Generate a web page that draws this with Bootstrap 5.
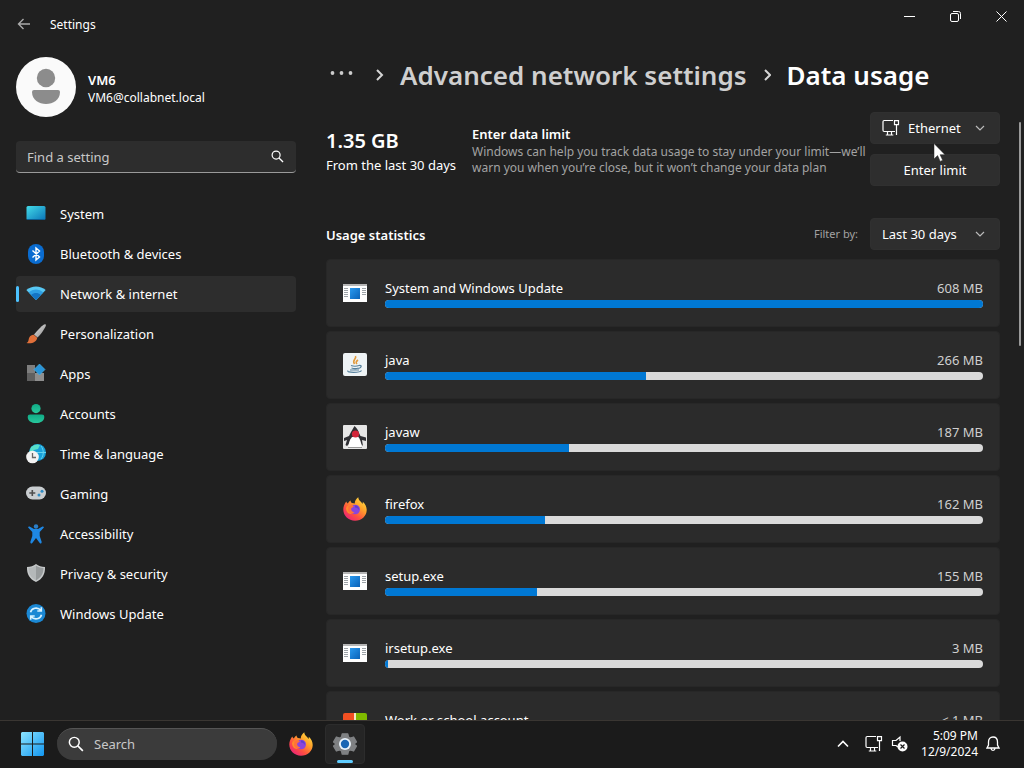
<!DOCTYPE html>
<html lang="en" data-bs-theme="dark">
<head>
<meta charset="utf-8">
<meta name="viewport" content="width=device-width, initial-scale=1">
<title>Settings - Data usage</title>
<link href="https://cdn.jsdelivr.net/npm/bootstrap@5.3.0/dist/css/bootstrap.min.css" rel="stylesheet">
<style>
  :root { --win: #202020; --panel: #2b2b2b; --control: #2e2e2e; --bar: #1b1b1b; --blue: #0078d4; --accent: #60cdff; }
  body { font-family: "Noto Sans", "Open Sans", sans-serif; font-size: 13px; line-height: 20px; color: #fff; background: var(--win); }
  svg { display: block; flex: none; }
  .line-ico { fill: none; stroke: currentColor; }
  .plain-btn { background: none; border: 0; padding: 0; color: inherit; }
  .fill-rest { min-height: 0; min-width: 0; }
  .title-bar { height: 48px; padding-left: 16px; }
  .title-text { font-size: 12px; padding: 2px 0 0 18px; }
  .back-btn { color: #aaa; }
  .win-btn { width: 46px; height: 32px; display: flex; align-items: center; justify-content: center; }
  .side-col { width: 312px; padding: 9px 16px 0; flex: none; }
  .avatar { width: 60px; height: 60px; }
  .user-name { font-weight: 600; line-height: 18px; }
  .user-mail { font-size: 12px; line-height: 18px; }
  .find-box { margin-top: 24px; height: 32px; background: #2d2d2d; border-radius: 4px; border-bottom: 1px solid #9a9a9a; padding: 0 12px 0 11px; }
  .find-box input, .task-search input { background: none; border: 0; outline: 0; color: inherit; min-width: 0; padding: 0; }
  .find-box input::placeholder, .task-search input::placeholder { color: #c8c8c8; opacity: 1; }
  .side-nav { margin-top: 23px; gap: 4px; }
  .side-nav .nav-link { height: 36px; display: flex; align-items: center; gap: 14px; padding: 0 10px; color: #fff; border-radius: 4px; position: relative; }
  .side-nav .nav-link.active { background: #2d2d2d; }
  .side-nav .nav-link.active::before { content: ""; position: absolute; left: 0; top: 10px; width: 3px; height: 16px; border-radius: 2px; background: #4cc2ff; }
  .main-col { padding-left: 14px; }
  .crumbs { height: 56px; padding: 0 0 2px 4px; font-size: 26px; line-height: 36px; font-weight: 600; white-space: nowrap; }
  .crumbs a { color: #cfcfcf; text-decoration: none; }
  .scroll-area { padding: 8px 0 0; }
  .total { font-size: 20px; font-weight: 600; line-height: 28px; }
  .sum-total { padding: 15px 16px 0 0; white-space: nowrap; }
  .sum-limit { padding-top: 12px; }
  .hint { font-size: 12px; line-height: 16px; color: #a3a3a3; }
  .side-controls { width: 130px; flex: none; gap: 10px; }
  .ctl { height: 32px; width: 130px; background: var(--control); border: 1px solid #303030; border-radius: 4px; color: #fff; font-size: 13px; line-height: 20px; padding: 0; }
  select.ctl { appearance: none; padding-left: 11px; }
  select.with-ico { padding-left: 37px; }
  .ctl-ico, .ctl-chev, .pointer { position: absolute; pointer-events: none; }
  .ctl-ico { left: 12px; top: 7px; }
  .ctl-chev { right: 15px; top: 11px; color: #bbb; }
  .pointer { left: 63px; top: 31px; z-index: 2; }
  .usage-head { margin-top: 32px; height: 32px; }
  .usage-title { font-size: 13px; line-height: 20px; padding-top: 2px; }
  .filter-label { font-size: 11px; line-height: 16px; color: #a3a3a3; }
  .usage-list { margin-top: 9px; gap: 4px; }
  .usage-card { background: var(--panel); border: 1px solid #272727; border-radius: 4px; height: 68px; padding: 0 16px; display: flex; align-items: center; gap: 18px; flex: none; }
  .usage-card .progress { --bs-progress-height: 8px; --bs-progress-bg: #dadada; --bs-progress-bar-bg: var(--blue); --bs-progress-border-radius: 4px; margin-top: 2px; }
  .size-text { color: #cfcfcf; }
  .rail { width: 24px; flex: none; padding-top: 18px; }
  .rail-thumb { width: 2px; height: 224px; margin-left: 19px; border-radius: 1px; background: #9a9a9a; }
  .task-bar { height: 48px; background: var(--bar); border-top: 1px solid #3a3632; padding: 0 20px 2px; flex: none; }
  .task-search { width: 220px; height: 32px; margin: 0 12px; background: #3b3b3b; border-top: 1px solid #555; border-radius: 16px; padding: 0 11px; gap: 10px; }
  .task-cell { width: 40px; height: 40px; margin-left: 12px; border-radius: 4px; background: #252525; border: 1px solid #2c2c2c; position: relative; display: flex; align-items: center; justify-content: center; }
  .task-cell::after { content: ""; position: absolute; left: 11px; bottom: 0; width: 16px; height: 3px; border-radius: 2px; background: var(--accent); }
  .clock { font-size: 12px; line-height: 16px; text-align: right; }
</style>
</head>
<body class="vh-100 d-flex flex-column overflow-hidden">

<svg width="0" height="0" class="position-absolute" aria-hidden="true">
  <defs>
    <linearGradient id="gBlue" x1="0" y1="0" x2="1" y2="1"><stop offset="0" stop-color="#2a9af0"/><stop offset="1" stop-color="#0a62b8"/></linearGradient>
    <linearGradient id="gSys" x1="0" y1="0" x2="1" y2="1"><stop offset="0" stop-color="#43dbe8"/><stop offset="1" stop-color="#0a74b8"/></linearGradient>
    <linearGradient id="gWin" x1="0" y1="0" x2="1" y2="1"><stop offset="0" stop-color="#8be4ff"/><stop offset="1" stop-color="#1296f0"/></linearGradient>
    <linearGradient id="gFox" x1="1" y1="0" x2="0.2" y2="1"><stop offset="0" stop-color="#fff04a"/><stop offset=".4" stop-color="#ffa22a"/><stop offset=".7" stop-color="#ff5040"/><stop offset="1" stop-color="#e8207c"/></linearGradient>
    <linearGradient id="gTeal" x1="0" y1="0" x2="0" y2="1"><stop offset="0" stop-color="#10ab86"/><stop offset="1" stop-color="#28c79c"/></linearGradient>
    <linearGradient id="gGray" x1="0" y1="0" x2="1" y2="1"><stop offset="0" stop-color="#e2e2e2"/><stop offset="1" stop-color="#8d8d8d"/></linearGradient>
    <symbol id="exe" viewBox="0 0 24 24">
      <path fill="#fff" d="M0 3h24v18H0z"/><path fill="#b5b5b5" d="M0 3h24v2H0z"/>
      <path fill="url(#gBlue)" d="M7 7h10v11H7z"/>
      <path stroke="#9da3a8" d="M1 7.500h4M1 9.500h4M1 11.500h4M1 13.500h4M1 15.500h4M19 7.500h4M19 9.500h4M19 11.500h4M19 13.500h4"/>
    </symbol>
    <symbol id="fox" viewBox="0 0 24 24">
      <path fill="url(#gFox)" d="M3.200 4.500c.4 1 1 1.500 1.700 2 .6-1.300 1.500-2.400 2.700-3 0 1 .5 1.900 1.300 2.500 1 .2 2 .6 2.900.6C11.500 4 13.500 1.500 15.300.3c0 2.300 1.300 3.300 2.800 4.700.6.6 1 1.300 1.200 2 .5-.8.600-1.400.500-2.300 2.500 2 3.900 5 3.900 8.300C23.700 19 18.500 23.800 12 23.800S.3 18.900.3 12.600c0-3 1-5.500 2.900-8.100z"/>
      <path fill="#ff8a2c" d="M3 11c2-3.500 5-4 8-3l2 3-5 6c-3 0-5-3-5-6z"/>
      <circle cx="12.200" cy="12.500" r="4.800" fill="#8a45dc"/>
      <path fill="#5d3fd0" d="M12 8.500c2.500 0 4.300 2 4 4.500-.8-1.500-2-2.500-4-2.500z"/>
      <path fill="#ff7139" d="M5.500 9c2-1.200 4.200-.7 5.300.2-.6 1.300-2.300 1.200-2.700 2.600-.2 2 1.500 3.500 3.400 3.800-2 1.800-5.300 1-6.500-2z"/>
    </symbol>
    <symbol id="net" viewBox="0 0 18 18">
      <path fill="none" stroke="currentColor" stroke-width="1.200" d="M11 1.500H2.200Q1 1.500 1 2.700v8.600q0 1.200 1.200 1.200H13M5.500 12.500v3M9.500 12.500v3M3.800 16h7.500M12.500 1.600h4v4h-4zM14.500 5.600V16"/>
    </symbol>
    <symbol id="chev" viewBox="0 0 10 10"><path fill="none" stroke="currentColor" stroke-width="1.200" d="M1 3l4 4 4-4"/></symbol>
    <symbol id="crumb" viewBox="0 0 10 14"><path fill="none" stroke="#d5d5d5" stroke-width="2" d="M2 2l5 5-5 5"/></symbol>
    <symbol id="lens" viewBox="0 0 14 14"><circle cx="5.500" cy="5.500" r="4.300" fill="none" stroke="currentColor" stroke-width="1.300"/><path stroke="currentColor" stroke-width="1.400" d="M8.600 8.600l4.400 4.400"/></symbol>
  </defs>
</svg>

<div class="fill-rest flex-grow-1 d-flex flex-column overflow-hidden">
  <header class="title-bar d-flex align-items-start justify-content-between flex-shrink-0">
    <div class="d-flex align-items-center h-100">
      <button class="plain-btn back-btn" aria-label="Back"><svg class="line-ico" width="16" height="16" stroke-width="1.400"><path d="M14 8H2.500M7.500 3l-5 5 5 5"/></svg></button>
      <span class="title-text">Settings</span>
    </div>
    <div class="d-flex">
      <button class="plain-btn win-btn" aria-label="Minimize"><svg class="line-ico" width="11" height="11"><path d="M0 5.500h11"/></svg></button>
      <button class="plain-btn win-btn" aria-label="Restore"><svg class="line-ico" width="11" height="11"><rect x=".5" y="2.500" width="8" height="8" rx="1.500"/><path d="M3 .5h5.500q2 0 2 2V8"/></svg></button>
      <button class="plain-btn win-btn" aria-label="Close"><svg class="line-ico" width="11" height="11"><path d="M.5.5l10 10M10.500.5l-10 10"/></svg></button>
    </div>
  </header>

  <div class="fill-rest d-flex flex-grow-1">
    <aside class="side-col">
      <div class="d-flex align-items-center">
        <svg class="avatar" viewBox="0 0 60 60"><circle cx="30" cy="30" r="30" fill="#fafafa"/><circle cx="30" cy="21" r="9.200" fill="#8c8c8c"/><path fill="#8c8c8c" d="M18 33h24q2 0 2 2c0 8-7 12-14 12s-14-4-14-12q0-2 2-2z"/></svg>
        <div class="ms-2 ps-1 pt-1">
          <div class="user-name">VM6</div>
          <div class="user-mail">VM6@collabnet.local</div>
        </div>
      </div>
      <div class="find-box d-flex align-items-center">
        <input class="flex-grow-1" type="text" placeholder="Find a setting" aria-label="Find a setting">
        <svg width="13" height="13"><use href="#lens"/></svg>
      </div>
      <nav class="side-nav nav flex-column">
        <a class="nav-link" href="#"><svg width="20" height="20"><rect x=".5" y="2" width="19" height="14" rx="1.500" fill="url(#gSys)"/><path stroke="#0b5d92" d="M1 15.500h18"/></svg>System</a>
        <a class="nav-link" href="#"><svg width="20" height="20"><rect x="2" y="0" width="16" height="20" rx="8" fill="#0a6cd0"/><path class="line-ico" stroke-width="1.400" d="M6.500 6.500l7 6.500-3.500 3V4l3.500 3-7 6.500"/></svg>Bluetooth &amp; devices</a>
        <a class="nav-link active" href="#" aria-current="page"><svg width="20" height="20"><path fill="#58c8f4" d="M.3 6C5.500 1.300 14.500 1.300 19.700 6L10 16z"/><path fill="#2e9fe4" d="M2.700 8.500C7 4.500 13 4.500 17.300 8.500L10 16z"/><path fill="#1474c4" d="M5.200 11c2.800-2.600 6.800-2.600 9.600 0L10 16z"/></svg>Network &amp; internet</a>
        <a class="nav-link" href="#"><svg width="20" height="20"><path fill="url(#gGray)" d="M19.500.3c.7.600.4 1.600-.2 2.700-2.200 4-4.700 7.500-7.800 10.500L8 10.500C11.500 6.500 15 2.500 18 .5q1-.5 1.500-.2z"/><path fill="#e0703a" d="M7.800 10.700l3.400 3c-.4 4-5 6.300-10.700 5.300 2.500-1.300 1.800-3.500 2.800-5.600 1-2 2.700-2.800 4.500-2.700z"/></svg>Personalization</a>
        <a class="nav-link" href="#"><svg width="20" height="20"><path fill="#7e7e7e" d="M1 1h8v8H1z"/><path fill="#606060" d="M1 9h8v8H1z"/><path fill="#8e8e8e" d="M9 9h9v8H9z"/><path fill="#2994d8" stroke="#4cb9ef" stroke-width=".6" d="M13.500 0l5.500 5.500-5.500 5.500L8 5.500z"/></svg>Apps</a>
        <a class="nav-link" href="#"><svg width="20" height="20"><circle cx="10" cy="4.600" r="4.600" fill="url(#gTeal)"/><path fill="url(#gTeal)" d="M4 10.500h12q2.300 0 2.300 2.200c0 4-3.300 6.300-8.300 6.300s-8.300-2.300-8.300-6.300q0-2.200 2.300-2.200z"/></svg>Accounts</a>
        <a class="nav-link" href="#"><svg width="20" height="20"><circle cx="11.500" cy="8.500" r="8.500" fill="#18a0d8"/><path fill="#57dfc9" d="M5 3c4-3 7-3 9-2l-2 4-4 1-3 4-2-1z"/><path fill="none" stroke="#64d3ef" d="M15 2c3 4 3 9 0 13M11 8.500h9"/><circle cx="6.500" cy="13" r="6.300" fill="#f2f2f2"/><path fill="none" stroke="#666" stroke-width="1.300" d="M6.500 9v4.500H10"/></svg>Time &amp; language</a>
        <a class="nav-link" href="#"><svg width="20" height="20"><rect x="0" y="2.500" width="20" height="13" rx="6.500" fill="#c9cdd0"/><path stroke="#4e4e4e" stroke-width="1.600" d="M3.300 9h6M6.300 6v6"/><circle cx="13" cy="11" r="1.500" fill="#2e8cc4"/><circle cx="16" cy="7.200" r="1.500" fill="#2e8cc4"/></svg>Gaming</a>
        <a class="nav-link" href="#"><svg width="20" height="20"><circle cx="10" cy="2.500" r="2.200" fill="#2b7fc8"/><path fill="#1e88e5" d="M3.500 2.500L8 5h4l4.500-2.500q1.300-.3 1.400 1L13.700 8v4l2 6q0 1.700-1.600 1.500L10 14l-4.100 5.500q-1.600.2-1.600-1.500l2-6V8L2.100 3.500q.1-1.300 1.400-1z"/></svg>Accessibility</a>
        <a class="nav-link" href="#"><svg width="20" height="20"><path fill="#c6c9ca" d="M10 0c2.500 2 5.500 3 9 3 .3 7-2.500 12-9 15C3.500 15 .7 10 1 3c3.500 0 6.500-1 9-3z"/><path fill="#989c9d" d="M10 1.500c2 1.500 4.300 2.300 7.500 2.600C17.500 10 15 13.700 10 16.500z"/><path fill="#b4b8b9" d="M10 1.500v15C5 13.700 2.500 10 2.500 4.100 5.700 3.800 8 3 10 1.500z"/></svg>Privacy &amp; security</a>
        <a class="nav-link" href="#"><svg width="20" height="20"><circle cx="10" cy="9.500" r="9.500" fill="#1b88d4"/><path fill="none" stroke="#d8f2ff" stroke-width="1.600" d="M4.500 8.300C5.500 4 11.500 2.500 15 6.500M15.300 3.200V7h-4M15.500 10.700c-1 4.300-7 5.800-10.500 1.800M4.700 15.800V12h4"/></svg>Windows Update</a>
      </nav>
    </aside>

    <div class="main-col fill-rest flex-grow-1 d-flex flex-column">
      <nav class="crumbs d-flex align-items-center flex-shrink-0" aria-label="Breadcrumb">
        <a href="#" aria-label="More"><svg width="24" height="8"><circle cx="2.500" cy="2" r="1.900" fill="#ccc"/><circle cx="11.500" cy="2" r="1.900" fill="#ccc"/><circle cx="20.500" cy="2" r="1.900" fill="#ccc"/></svg></a>
        <svg class="ms-3 me-2" width="22" height="14"><use href="#crumb" x="5" width="10" height="14"/></svg>
        <a href="#">Advanced network settings</a>
        <svg class="mx-3" width="8" height="14"><use href="#crumb" width="10" height="14"/></svg>
        <span aria-current="page">Data usage</span>
      </nav>
      <div class="fill-rest d-flex flex-grow-1">
        <main class="scroll-area flex-grow-1 overflow-hidden">
          <section class="d-flex">
            <div class="sum-total">
              <div class="total">1.35 GB</div>
              <div>From the last 30 days</div>
            </div>
            <div class="sum-limit flex-grow-1">
              <div class="fw-semibold">Enter data limit</div>
              <div class="hint">Windows can help you track data usage to stay under your limit—we’ll warn you when you’re close, but it won’t change your data plan</div>
            </div>
            <div class="side-controls d-flex flex-column">
              <div class="position-relative">
                <select class="ctl with-ico d-block" aria-label="Network"><option>Ethernet</option></select>
                <svg class="ctl-ico" width="18" height="18"><use href="#net"/></svg>
                <svg class="ctl-chev" width="10" height="10"><use href="#chev"/></svg>
                <svg class="pointer" width="13" height="20"><path fill="#fff" stroke="#222" stroke-width=".5" d="M1 .5v15.500l3.600-3.400 2.600 5.800 2.500-1.100-2.600-5.600H12z"/></svg>
              </div>
              <button class="ctl">Enter limit</button>
            </div>
          </section>

          <section>
            <div class="usage-head d-flex align-items-center">
              <h2 class="usage-title m-0 fw-semibold flex-grow-1">Usage statistics</h2>
              <label class="filter-label me-2 pe-1" for="range">Filter by:</label>
              <div class="position-relative">
                <select id="range" class="ctl d-block"><option>Last 30 days</option></select>
                <svg class="ctl-chev" width="10" height="10"><use href="#chev"/></svg>
              </div>
            </div>
            <div class="usage-list d-flex flex-column">
              <div class="usage-card">
                <svg width="24" height="24"><use href="#exe"/></svg>
                <div class="flex-grow-1"><div class="d-flex justify-content-between"><span>System and Windows Update</span><span class="size-text">608 MB</span></div>
                <div class="progress"><div class="progress-bar" style="width:100%"></div></div></div>
              </div>
              <div class="usage-card">
                <svg width="24" height="24"><rect width="24" height="23" rx="2" fill="#eef3f5"/><path fill="none" stroke="#e29a3c" stroke-width="1.600" d="M12.500 3c1.500 3-4 4-1 8M15 7c-2 1.500-2.500 2.500-1 4"/><path fill="none" stroke="#56809c" stroke-width="1.200" d="M8 12.500q4 1.500 8 0M8.500 15q4 1.300 7 0M16 12.500c3-.5 3 2-.5 3M5 17.500c-2 2.500 12 2.500 13.500 0M7 17h9"/></svg>
                <div class="flex-grow-1"><div class="d-flex justify-content-between"><span>java</span><span class="size-text">266 MB</span></div>
                <div class="progress"><div class="progress-bar" style="width:43.700%"></div></div></div>
              </div>
              <div class="usage-card">
                <svg width="24" height="24"><rect width="24" height="24" rx="1" fill="#e6e6e6"/><path fill="#2f2f33" d="M11.500 1c2 2 4 4 4.500 7l1.500 3 5.500 1.500V16l-4-1 1 6-4-4-8 0-4 4-1.500-1L4 15l-3 1v-3l5-2 2-4z"/><path fill="#fff" d="M9 12l6-.5c2 2.500 3.500 6 3.500 10.500q-6 1.500-13 0C5.500 18 6.500 15 9 12z"/><circle cx="12.500" cy="9" r="3.600" fill="#d3263a"/><path stroke="#999" d="M5 22.500h14"/></svg>
                <div class="flex-grow-1"><div class="d-flex justify-content-between"><span>javaw</span><span class="size-text">187 MB</span></div>
                <div class="progress"><div class="progress-bar" style="width:30.800%"></div></div></div>
              </div>
              <div class="usage-card">
                <svg width="24" height="24"><use href="#fox"/></svg>
                <div class="flex-grow-1"><div class="d-flex justify-content-between"><span>firefox</span><span class="size-text">162 MB</span></div>
                <div class="progress"><div class="progress-bar" style="width:26.800%"></div></div></div>
              </div>
              <div class="usage-card">
                <svg width="24" height="24"><use href="#exe"/></svg>
                <div class="flex-grow-1"><div class="d-flex justify-content-between"><span>setup.exe</span><span class="size-text">155 MB</span></div>
                <div class="progress"><div class="progress-bar" style="width:25.400%"></div></div></div>
              </div>
              <div class="usage-card">
                <svg width="24" height="24"><use href="#exe"/></svg>
                <div class="flex-grow-1"><div class="d-flex justify-content-between"><span>irsetup.exe</span><span class="size-text">3 MB</span></div>
                <div class="progress"><div class="progress-bar" style="width:0.500%"></div></div></div>
              </div>
              <div class="usage-card">
                <svg width="24" height="24"><path fill="#f25022" d="M2 0h9v11H0V2q0-2 2-2z"/><path fill="#7fba00" d="M13 0h9q2 0 2 2v9H13z"/><path fill="#00a4ef" d="M0 13h11v11H0z"/><path fill="#ffb900" d="M13 13h11v11H13z"/><path stroke="#f3e9c0" stroke-width="2" d="M12 0v24"/></svg>
                <div class="flex-grow-1"><div class="d-flex justify-content-between"><span>Work or school account</span><span class="size-text">&lt; 1 MB</span></div>
                <div class="progress"><div class="progress-bar" style="width:0%"></div></div></div>
              </div>
            </div>
          </section>
        </main>
        <div class="rail"><div class="rail-thumb"></div></div>
      </div>
    </div>
  </div>
</div>

<footer class="task-bar d-flex align-items-center">
  <button class="plain-btn" aria-label="Start"><svg width="25" height="24"><path fill="url(#gWin)" d="M2 0h10v11.500H1V1zM13 0h10l1 1v10.500H13zM1 12.500h11V24H2l-1-1zM13 12.500h11V23l-1 1H13z"/></svg></button>
  <div class="task-search d-flex align-items-center">
    <svg width="16" height="16"><use href="#lens"/></svg>
    <input type="text" placeholder="Search" aria-label="Search">
  </div>
  <button class="plain-btn" aria-label="Firefox"><svg width="24" height="24"><use href="#fox"/></svg></button>
  <button class="plain-btn task-cell" aria-label="Settings"><svg width="24" height="24" viewBox="0 0 26 26"><path fill="#7f8183" stroke="#7f8183" stroke-width="1.500" stroke-linejoin="round" d="M10 2h6l.8 3.500 2 1.100L22.300 5.500l3 5.200-2.600 2.300 2.600 2.300-3 5.200-3.500-1.100-2 1.100L16 24h-6l-.8-3.500-2-1.100-3.500 1.100-3-5.200L3.300 13 .7 10.700l3-5.200 3.500 1.100 2-1.100z"/><circle cx="13" cy="13" r="6.500" fill="#e9f2fa"/><circle cx="13" cy="13" r="4.500" fill="#1a66b4"/></svg></button>
  <div class="ms-auto d-flex align-items-center pe-1">
    <button class="plain-btn me-3" aria-label="Show hidden icons"><svg class="line-ico" width="12" height="10" stroke-width="1.600"><path d="M1 7.500l5-5 5 5"/></svg></button>
    <svg class="me-2" width="18" height="18"><use href="#net"/></svg>
    <svg width="18" height="18"><path class="line-ico" stroke-width="1.200" d="M7 12l-2-1.500H1.500v-5H5L9 2v4"/><circle cx="11.500" cy="11.500" r="5" fill="#fff"/><path stroke="#1b1b1b" stroke-width="1.200" d="M9.500 9.500l4 4M13.500 9.500l-4 4"/></svg>
    <div class="clock ms-2 ps-1"><div>5:09 PM</div><div>12/9/2024</div></div>
    <button class="plain-btn ms-2" aria-label="Notifications"><svg class="line-ico" width="14" height="16" stroke-width="1.300"><path d="M7 1C4 1 2.500 3.300 2.500 6v3L1 12h12l-1.500-3V6C11.500 3.300 10 1 7 1zM5 12.500c.3 2.500 3.700 2.500 4 0"/></svg></button>
  </div>
</footer>
<script src="https://cdn.jsdelivr.net/npm/bootstrap@5.3.0/dist/js/bootstrap.bundle.min.js"></script>
</body>
</html>
